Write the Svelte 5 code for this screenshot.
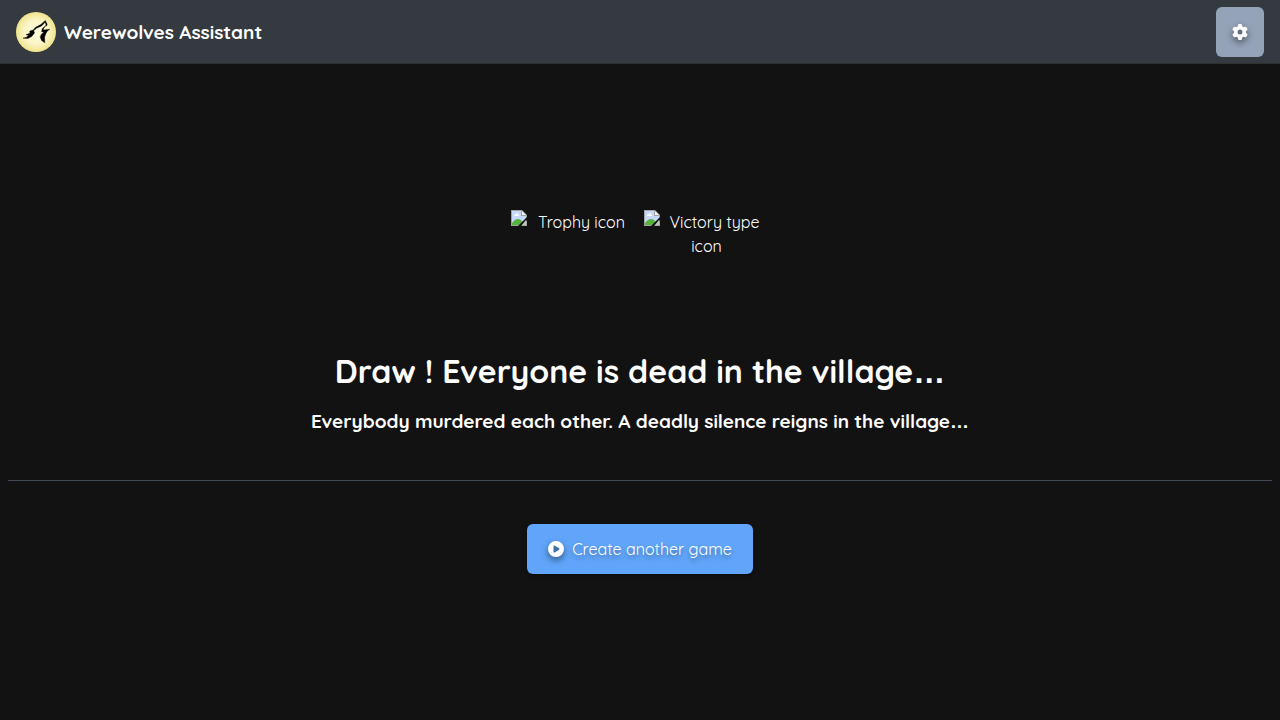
<script>
  const pictures = ['Trophy icon', 'Victory type icon'];
</script>

<div class="page">
  <header>
    <a class="brand" href="/">
      <svg class="logo" viewBox="0 0 40 40" aria-hidden="true">
        <defs>
          <radialGradient id="moon">
            <stop offset="0" stop-color="#fffce0" />
            <stop offset="0.6" stop-color="#fbf5c6" />
            <stop offset="1" stop-color="#efe38c" />
          </radialGradient>
        </defs>
        <circle cx="20" cy="20" r="20" fill="url(#moon)" />
        <g stroke="#000" stroke-width="0.4" stroke-linejoin="round">
          <path d="M7 26.200 L10.500 25.200 L12.500 23.300 L10 22.800 L14 21 L13.800 19 L17.200 18 L19.600 15.200 L24.800 12.600 L29.300 8.500 L31.200 12.300 L30.300 14.300 L29.600 11 L28.800 10.600 L25.600 13.900 L20.500 16.200 L17.600 18.800 L18.600 20.800 L16 24.300 L12 26.400 Z" />
          <path d="M29.800 13.400 L27.800 16.200 L27.300 18 L33.800 17.300 L31.200 19.200 L29.700 22 L28.600 25.200 L28.800 30.800 L25.600 28.600 L24.200 25.200 L25 22.800 L27.900 20 L25.600 19.700 L26.200 16.700 Z" />
        </g>
      </svg>
      <span>Werewolves Assistant</span>
    </a>
    <button class="settings" type="button" aria-label="Settings">
      <svg viewBox="0 0 512 512" aria-hidden="true">
        <path d="M495.9 166.6c3.2 8.7 .5 18.4-6.4 24.6l-43.3 39.4c1.1 8.3 1.7 16.8 1.7 25.4s-.6 17.1-1.7 25.4l43.3 39.4c6.9 6.2 9.6 15.9 6.4 24.6c-4.4 11.9-9.7 23.3-15.8 34.3l-4.7 8.1c-6.6 11-14 21.4-22.1 31.2c-5.9 7.2-15.7 9.6-24.5 6.8l-55.7-17.7c-13.4 10.3-28.2 18.9-44 25.4l-12.5 57.1c-2 9.1-9 16.3-18.2 17.8c-13.8 2.3-28 3.5-42.5 3.5s-28.7-1.2-42.5-3.5c-9.2-1.5-16.2-8.7-18.2-17.8l-12.5-57.1c-15.8-6.5-30.6-15.1-44-25.4L83.1 425.9c-8.8 2.8-18.6 .3-24.5-6.8c-8.1-9.8-15.5-20.2-22.1-31.2l-4.7-8.1c-6.1-11-11.4-22.4-15.8-34.3c-3.2-8.7-.5-18.4 6.4-24.6l43.3-39.4C64.6 273.1 64 264.6 64 256s.6-17.1 1.7-25.4L22.4 191.2c-6.9-6.2-9.6-15.9-6.4-24.6c4.4-11.9 9.7-23.3 15.8-34.3l4.7-8.1c6.6-11 14-21.4 22.1-31.2c5.9-7.2 15.7-9.6 24.5-6.8l55.7 17.7c13.4-10.3 28.2-18.9 44-25.4l12.5-57.1c2-9.1 9-16.3 18.2-17.8C227.3 1.2 241.5 0 256 0s28.7 1.2 42.5 3.5c9.2 1.5 16.2 8.7 18.2 17.8l12.5 57.1c15.8 6.5 30.6 15.1 44 25.4l55.7-17.7c8.8-2.8 18.6-.3 24.5 6.8c8.1 9.8 15.5 20.2 22.1 31.2l4.7 8.1c6.1 11 11.4 22.4 15.8 34.3zM256 336a80 80 0 1 0 0-160 80 80 0 1 0 0 160z" />
      </svg>
    </button>
  </header>

  <main>
    <div class="pictures">
      {#each pictures as label}
        <div class="picture">
          <svg viewBox="0 0 16 16" aria-hidden="true">
            <path d="M0 0h11l5 5v11H0z" fill="#a3a3a3" />
            <path d="M1 1h9v5h5v9H1z" fill="#c6d8fb" />
            <path d="M11 1l4 4h-4z" fill="#f2f2f2" />
            <path d="M3 6c0-1.400 1-1.700 1.600-1.600C5 2.800 7 3 7.200 4.400 8.300 4.400 8.400 6 8 6z" fill="#fff" />
            <path d="M1 15v-2c2-2.500 4-4 6-4 2.500 0 4 2 5 3l3 1v2z" fill="#56b13d" />
            <path d="M16 7v3l-6 6H7z" fill="#121212" />
            <path d="M15 10v5h-4z" fill="#b9cdb8" />
          </svg>
          <span>{label}</span>
        </div>
      {/each}
    </div>
    <h1>Draw ! Everyone is dead in the village<span class="dots">…</span></h1>
    <h2>Everybody murdered each other. A deadly silence reigns in the village<span class="dots">…</span></h2>
    <hr />
    <a class="create" href="/game-lobby">
      <svg viewBox="0 0 512 512" aria-hidden="true">
        <path d="M0 256a256 256 0 1 1 512 0A256 256 0 1 1 0 256zM188.300 147.100c-7.600 4.200-12.300 12.300-12.300 20.900V344c0 8.700 4.700 16.700 12.300 20.900s16.800 4.100 24.300-.5l144-88c7.100-4.400 11.500-12.100 11.500-20.500s-4.400-16.100-11.500-20.500l-144-88c-7.400-4.500-16.700-4.700-24.300-.5z" />
      </svg>
      <span>Create another game</span>
    </a>
  </main>
</div>

<style>
  :global(body) {
    margin: 0;
    background: #121212;
  }

  .page {
    display: flex;
    flex-direction: column;
    min-height: 100vh;
    color: #fff;
    font: 16px/24px Quicksand, Lato, sans-serif;
  }

  header {
    display: flex;
    align-items: center;
    justify-content: space-between;
    box-sizing: border-box;
    min-height: 64px;
    padding: 0 16px;
    background: #343a40;
    border-bottom: 1px solid #303030;
  }

  .brand {
    display: flex;
    align-items: center;
    gap: 8px;
    color: #fff;
    font-size: 19px;
    font-weight: 700;
    text-decoration: none;
  }

  .logo {
    width: 40px;
    height: 40px;
  }

  .settings,
  .create {
    display: flex;
    align-items: center;
    justify-content: center;
    box-sizing: border-box;
    height: 50px;
    border: 0;
    border-radius: 6px;
    color: #fff;
    cursor: pointer;
  }

  .settings {
    width: 48px;
    padding: 0;
    background: #94a3b8;
  }

  .settings svg,
  .create svg {
    width: 16px;
    height: 16px;
    fill: currentColor;
    overflow: visible;
    filter: drop-shadow(0 3px 3px rgba(0, 0, 0, 0.5));
  }

  main {
    display: flex;
    flex: 1;
    flex-direction: column;
    align-items: center;
    justify-content: center;
    padding: 0 8px;
    text-align: center;
  }

  .pictures {
    display: flex;
    gap: 8px;
  }

  .picture {
    width: 125px;
    height: 125px;
  }

  .picture svg {
    float: left;
    width: 16px;
    height: 16px;
  }

  h1,
  h2 {
    margin: 0;
    color: #fff;
    font-weight: 700;
  }

  h1 {
    margin-top: 16px;
    font-size: 32px;
    line-height: 40px;
  }

  h2 {
    margin-top: 16px;
    font-size: 19px;
    line-height: 28px;
  }

  .dots {
    font-family: "Liberation Sans", sans-serif;
    line-height: 1;
  }

  hr {
    align-self: stretch;
    margin: 45px 0 43px;
    border: 0;
    border-top: 1px solid #424b57;
  }

  .create {
    gap: 8px;
    padding: 0 21px;
    background: #60a5fa;
    box-shadow: 0 2px 4px rgba(0, 0, 0, 0.4);
    font-size: 16px;
    text-decoration: none;
    text-shadow: 0 3px 4px rgba(0, 0, 0, 0.35);
  }
</style>
